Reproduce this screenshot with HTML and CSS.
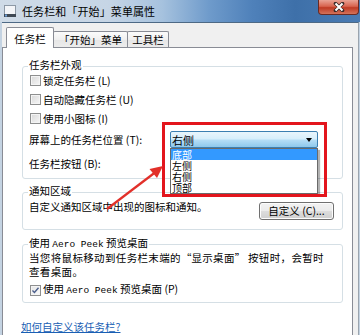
FILE: index.html
```html
<!DOCTYPE html>
<html lang="zh-CN">
<head>
<meta charset="utf-8">
<title>任务栏和「开始」菜单属性</title>
<link rel="stylesheet" href="styles.css">
</head>
<body>
<div class="window">
  <div class="titlebar">
    <svg class="app-icon" viewBox="0 0 14 14" width="14" height="14">
      <rect x="1.5" y="1.5" width="11" height="11" fill="#f3f5f8" stroke="#8d99a6"/>
      <rect x="1" y="10" width="12" height="3" fill="#3f4954"/>
      <rect x="2" y="10.5" width="2" height="2" fill="#6fa0d8"/>
    </svg>
    <span class="title">任务栏和「开始」菜单属性</span>
    <div class="close">
      <svg viewBox="0 0 12 10" width="12" height="10">
        <path d="M2.5 1.5 L9.5 8.5 M9.5 1.5 L2.5 8.5" stroke="#3a2a28" stroke-width="3.6" stroke-linecap="round"/>
        <path d="M2.5 1.5 L9.5 8.5 M9.5 1.5 L2.5 8.5" stroke="#ffffff" stroke-width="2"/>
      </svg>
    </div>
  </div>
  <div class="client">
    <div class="tabs">
      <div class="tab active">任务栏</div>
      <div class="tab t2">「开始」菜单</div>
      <div class="tab t3">工具栏</div>
    </div>
    <div class="panel">
      <div class="group g1">
        <div class="legend">任务栏外观</div>
        <div class="row check"><span class="box"></span><span class="label">锁定任务栏 (L)</span></div>
        <div class="row check"><span class="box"></span><span class="label">自动隐藏任务栏 (U)</span></div>
        <div class="row check"><span class="box"></span><span class="label">使用小图标 (I)</span></div>
        <div class="row combo-row">
          <span class="field-label">屏幕上的任务栏位置 (T):</span>
          <div class="combo">
            <span class="combo-text">右侧</span>
            <span class="combo-arrow"></span>
            <div class="list">
              <div class="item selected">底部</div>
              <div class="item">左侧</div>
              <div class="item">右侧</div>
              <div class="item">顶部</div>
            </div>
          </div>
        </div>
        <div class="row btn-row">任务栏按钮 (B):</div>
      </div>

      <div class="group g2">
        <div class="legend">通知区域</div>
        <div class="notify-row">
          <span class="notify-text">自定义通知区域中出现的图标和通知。</span>
          <span class="button">自定义 (C)...</span>
        </div>
      </div>

      <div class="group g3">
        <div class="legend">使用 <span class="lat">Aero Peek</span> 预览桌面</div>
        <div class="desc">当您将鼠标移动到任务栏末端的<span class="ql">“</span>显示桌面<span class="qr">”</span> 按钮时，会暂时<br>查看桌面。</div>
        <div class="row check peek"><span class="box checked"><svg viewBox="0 0 11 11" width="9" height="9"><path d="M1.8 5.6 L4.2 8 L9.2 2.2" fill="none" stroke="#4b5f8c" stroke-width="1.7"/></svg></span><span class="label">使用 <span class="lat">Aero Peek</span> 预览桌面 (P)</span></div>
      </div>

      <a class="help" href="#">如何自定义该任务栏?</a>
    </div>
  </div>
</div>
<div class="annot-box"></div>
<svg class="annot-arrow" viewBox="0 0 360 335" width="360" height="335">
  <line x1="107" y1="209" x2="155" y2="172.5" stroke="#e2302a" stroke-width="2.2"/>
  <polygon points="163,166 157,178 149.5,169" fill="#e2302a"/>
</svg>
</body>
</html>
```

FILE: styles.css
```css
* { box-sizing: border-box; }
html, body { margin: 0; padding: 0; }
body {
  width: 360px;
  height: 335px;
  overflow: hidden;
  position: relative;
  background: #c4d3e2;
  font-family: "Noto Sans CJK SC", "Noto Sans", sans-serif;
  font-size: 10.5px;
  color: #000;
}

.titlebar {
  height: 22px;
  display: flex;
  align-items: center;
  background: linear-gradient(to right, #cfdbe7 0%, #c6d5e5 30%, #a6c2de 45%, #6f9bcb 58%, #4f81ba 70%, #3e70a9 82%, #4a7bb3 100%);
}
.app-icon { margin-left: 3px; flex: none; }
.title { margin-left: 5px; font-size: 11px; line-height: 14px; color: #000; letter-spacing: 0.1px; }
.close {
  margin-left: auto;
  margin-right: 1px;
  align-self: flex-start;
  width: 41px;
  height: 15px;
  border: 1px solid #6b2a22;
  border-top: none;
  border-radius: 0 0 4px 4px;
  background: linear-gradient(#e9a395 0%, #d8644f 45%, #bf3a24 55%, #d4735a 100%);
  display: flex;
  align-items: center;
  justify-content: center;
}

.client {
  margin-left: 2px;
  width: 357px;
  height: 313px;
  background: #f0f0f0;
  border-top: 1px solid #4d6985;
  border-right: 1px solid #9aa4ae;
}

.tabs {
  height: 24px;
  display: flex;
  align-items: flex-end;
  padding-left: 4px;
}
.tab {
  height: 16px;
  border: 1px solid #898c95;
  border-bottom: none;
  border-radius: 2px 2px 0 0;
  background: linear-gradient(#fbfbfb, #f0f0f0 50%, #e6e6e6 51%, #ececec);
  text-align: center;
  line-height: 14px;
  padding-top: 1px;
  white-space: nowrap;
}
.tab.active {
  position: relative;
  z-index: 2;
  width: 48px;
  height: 21px;
  margin-bottom: -1px;
  background: #fff;
  padding-top: 4px;
}
.tab.t2 { width: 75px; margin-left: -1px; }
.tab.t3 { width: 42px; margin-left: -1px; }

.panel {
  position: relative;
  z-index: 1;
  width: 351px;
  height: 290px;
  background: #fff;
  border: 1px solid #898c95;
  border-bottom: none;
}

.group {
  margin: 18px 9px 0 19px;
  border: 1px solid #d5dfe5;
  border-radius: 3px;
  padding: 0 6px 6px 6px;
}
.group.g2 { margin-top: 13px; padding-bottom: 9px; }
.group.g3 { margin-top: 14px; padding-bottom: 3px; }

.legend {
  width: max-content;
  margin: -9px 0 -1px -1px;
  padding: 0 1px;
  background: #fff;
  line-height: 14px;
  white-space: nowrap;
}

.row { display: flex; align-items: center; white-space: nowrap; }
.check { height: 19px; }
.label { line-height: 14px; }
.box {
  width: 11px;
  height: 11px;
  margin: 0 2px 0 1px;
  border: 1px solid #8e8f8f;
  background: linear-gradient(135deg, #d8d8d8, #f7f7f7);
  box-shadow: inset 0 0 0 1px #f4f4f4;
  display: flex;
  align-items: center;
  justify-content: center;
  flex: none;
}
.box.checked { background: linear-gradient(135deg, #e4e4e4, #fbfbfb); }

.combo-row { margin-top: 3px; height: 17px; align-items: stretch; }
.field-label { width: 141px; padding-top: 2px; line-height: 14px; }
.combo {
  position: relative;
  width: 148px;
  height: 17px;
  border: 1px solid #3c7fb1;
  border-radius: 2px;
  background: linear-gradient(#e9f5fc 0%, #d6eefb 48%, #b6def6 52%, #8ec8ec 100%);
  display: flex;
  align-items: center;
}
.combo-text { padding-left: 1px; line-height: 14px; font-size: 11px; }
.combo-arrow {
  margin-left: auto;
  margin-right: 5px;
  width: 0;
  height: 0;
  border-left: 3.5px solid transparent;
  border-right: 3.5px solid transparent;
  border-top: 4px solid #000;
}
.list {
  position: absolute;
  top: 16px;
  left: -1px;
  width: 148px;
  border: 1px solid #6a6a6a;
  background: #fff;
  box-shadow: 2px 2px 1px rgba(0, 0, 0, 0.3);
  z-index: 3;
}
.item {
  height: 11px;
  font-size: 10px;
  line-height: 11px;
  padding-left: 1px;
}
.item.selected { background: #3399ff; color: #fff; }

.btn-row { margin-top: 6px; height: 18px; }

.notify-row {
  display: flex;
  justify-content: space-between;
  align-items: flex-start;
  padding-top: 3px;
  height: 23px;
}
.notify-text { line-height: 14px; white-space: nowrap; }
.button {
  margin-top: 2px;
  margin-right: 2px;
  width: 75px;
  height: 18px;
  border: 1px solid #707070;
  border-radius: 3px;
  background: linear-gradient(#f2f2f2 0%, #ebebeb 50%, #dddddd 51%, #cfcfcf 100%);
  box-shadow: inset 0 0 0 1px #fcfcfc;
  text-align: center;
  line-height: 15px;
  white-space: nowrap;
}

.desc { line-height: 14px; white-space: nowrap; letter-spacing: 0.35px; }
.ql, .qr { display: inline-block; width: 10.5px; }
.ql { text-align: right; }
.qr { text-align: left; }
.peek { margin-top: 2px; height: 18px; }
.lat { font-family: "Liberation Mono", monospace; font-size: 9.5px; letter-spacing: 0; }

.help {
  display: inline-block;
  margin: 17px 0 0 18px;
  line-height: 14px;
  color: #1a5fb4;
  text-decoration: underline;
}

.annot-box {
  position: absolute;
  left: 162px;
  top: 122px;
  width: 165px;
  height: 75px;
  border: 3px solid #e3151d;
  z-index: 5;
}
.annot-arrow {
  position: absolute;
  left: 0;
  top: 0;
  z-index: 6;
  pointer-events: none;
}
```
